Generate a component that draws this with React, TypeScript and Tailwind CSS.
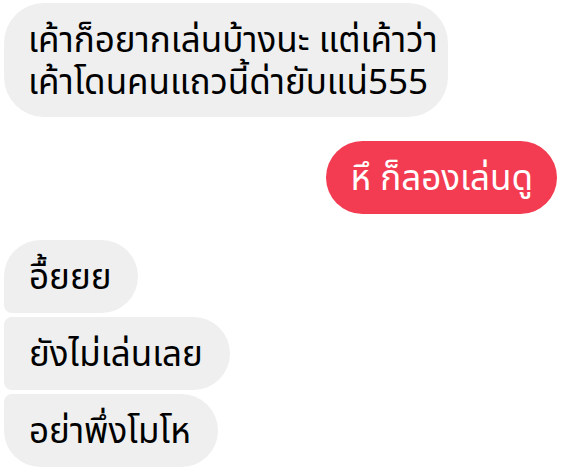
const left = [
  { text: 'อื้ยยย', round: 'rounded-[37px] rounded-bl-[8px]' },
  { text: 'ยังไม่เล่นเลย', round: 'rounded-[37px] rounded-l-[8px]' },
  { text: 'อย่าพึ่งโมโห', round: 'rounded-[37px] rounded-tl-[8px]' },
];

export default function App() {
  return (
    <div
      className="w-[562px] h-[471px] bg-white flex flex-col pl-[4px] pr-[5px] pt-[3px] overflow-hidden"
      style={{ fontFamily: '"Noto Sans", "Noto Sans Thai", sans-serif' }}
    >
      <div className="self-start w-[444px] bg-[#efefef] rounded-[40px] px-[24px] py-[15px] text-[35px] leading-[42px] text-black whitespace-nowrap">
        <p>เค้าก็อยากเล่นบ้างนะ แต่เค้าว่า</p>
        <p>เค้าโดนคนแถวนี้ด่ายับแน่555</p>
      </div>

      <div className="self-end mt-[24px] bg-[#f33b51] rounded-[37px] pl-[25px] pr-[24px] h-[73px] flex items-center text-[35px] text-white">
        หึ ก็ลองเล่นดู
      </div>

      <div className="mt-[26px] flex flex-col gap-[4px]">
        {left.map((m) => (
          <div
            key={m.text}
            className={`self-start bg-[#efefef] ${m.round} pl-[25px] pr-[27px] h-[73px] flex items-center text-[35px] text-black`}
          >
            {m.text}
          </div>
        ))}
      </div>
    </div>
  );
}
